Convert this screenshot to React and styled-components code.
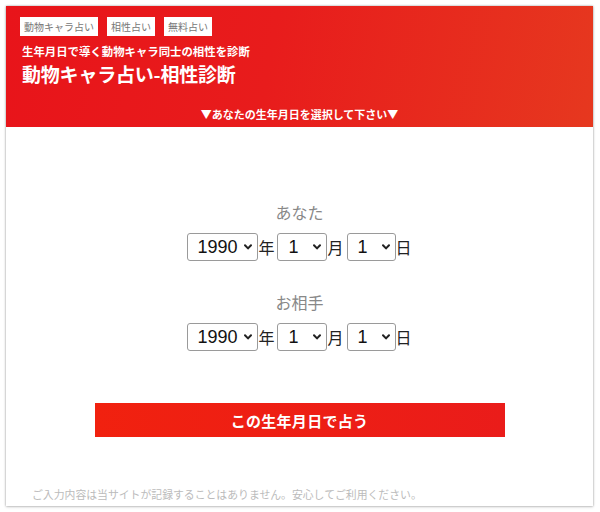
import React from "react";
import styled, { createGlobalStyle } from "styled-components";

const Global = createGlobalStyle`
  html, body { margin: 0; padding: 0; background: #ffffff; }
  body { font-family: "Noto Sans CJK JP", "Noto Sans", sans-serif; }
  * { box-sizing: border-box; }
`;

const Page = styled.div`
  padding: 6px 7px 6px 6px;
  width: 600px;
`;

const Card = styled.div`
  width: 587px;
  height: 500px;
  background: #fff;
  box-shadow: 0 0 2px rgba(0, 0, 0, 0.35), 0 1px 3px rgba(0, 0, 0, 0.15);
  display: flex;
  flex-direction: column;
`;

const Header = styled.header`
  height: 121px;
  background: linear-gradient(100deg, #e8141a 0%, #e81c1c 45%, #e6381f 100%);
  padding: 11px 14px 0;
  color: #fff;
  display: flex;
  flex-direction: column;
`;

const Tags = styled.div`
  display: flex;
  gap: 9px;
`;

const Tag = styled.span`
  background: #fff;
  color: #777;
  font-size: 10px;
  line-height: 19px;
  height: 19px;
  padding: 0 4px;
`;

const Sub = styled.div`
  margin-top: 7px;
  padding-left: 2px;
  font-size: 11.4px;
  line-height: 16px;
  font-weight: 700;
`;

const Title = styled.h1`
  margin: 3px 0 0;
  padding-left: 2px;
  font-size: 19px;
  line-height: 24px;
  font-weight: 700;
  letter-spacing: -0.2px;
`;

const Instruction = styled.div`
  margin-top: 20px;
  text-align: center;
  font-size: 11px;
  line-height: 16px;
  font-weight: 700;
`;

const Body = styled.main`
  flex: 1;
  display: flex;
  flex-direction: column;
  align-items: center;
`;

const PersonLabel = styled.div`
  margin-top: ${(p) => p.$top}px;
  font-size: 16px;
  line-height: 22px;
  color: #888;
`;

const DateRow = styled.div`
  margin-top: 10px;
  display: flex;
  align-items: center;
  height: 28px;
`;

const SelectWrap = styled.span`
  position: relative;
  display: inline-block;
  width: ${(p) => p.$w}px;
  height: 28px;
`;

const Select = styled.select`
  appearance: none;
  -webkit-appearance: none;
  width: 100%;
  height: 28px;
  border: 1px solid #9a9a9a;
  border-radius: 3px;
  background: #fff;
  color: #111;
  font-family: "Liberation Sans", "Noto Sans", sans-serif;
  font-size: 18px;
  padding: 0 0 0 ${(p) => p.$pl}px;
  outline: none;
`;

const Chevron = styled.svg`
  position: absolute;
  right: 6px;
  top: 11px;
  width: 8px;
  height: 6px;
  pointer-events: none;
`;

const Unit = styled.span`
  font-size: 16px;
  color: #222;
  margin-right: ${(p) => p.$mr}px;
  line-height: 28px;
`;

const Button = styled.button`
  margin-top: 52px;
  width: 410px;
  height: 34px;
  border: none;
  background: linear-gradient(90deg, #f1210f 0%, #ea1c1a 100%);
  color: #fff;
  font-family: "Noto Sans CJK JP", sans-serif;
  font-size: 15px;
  font-weight: 700;
  letter-spacing: 0.3px;
  padding: 0;
`;

const Note = styled.p`
  margin: 49px 0 0;
  align-self: flex-start;
  padding-left: 26px;
  font-size: 10.85px;
  line-height: 16px;
  color: #bbb;
`;

const years = Array.from({ length: 100 }, (_, i) => 1930 + i);
const months = Array.from({ length: 12 }, (_, i) => i + 1);
const days = Array.from({ length: 31 }, (_, i) => i + 1);

function Picker({ w, pl, options, value }) {
  return (
    <SelectWrap $w={w}>
      <Select $pl={pl} defaultValue={value}>
        {options.map((o) => (
          <option key={o} value={o}>
            {o}
          </option>
        ))}
      </Select>
      <Chevron viewBox="0 0 8 6">
        <path d="M1 1.2 L4 4.4 L7 1.2" fill="none" stroke="#222" strokeWidth="2" strokeLinecap="round" strokeLinejoin="round" />
      </Chevron>
    </SelectWrap>
  );
}

function DateInputs() {
  return (
    <DateRow>
      <Picker w={71} pl={9} options={years} value={1990} />
      <Unit $mr={3}>年</Unit>
      <Picker w={50} pl={10} options={months} value={1} />
      <Unit $mr={3}>月</Unit>
      <Picker w={49} pl={10} options={days} value={1} />
      <Unit $mr={0}>日</Unit>
    </DateRow>
  );
}

export default function App() {
  return (
    <Page>
      <Global />
      <Card>
        <Header>
          <Tags>
            <Tag>動物キャラ占い</Tag>
            <Tag>相性占い</Tag>
            <Tag>無料占い</Tag>
          </Tags>
          <Sub>生年月日で導く動物キャラ同士の相性を診断</Sub>
          <Title>動物キャラ占い-相性診断</Title>
          <Instruction>▼あなたの生年月日を選択して下さい▼</Instruction>
        </Header>
        <Body>
          <PersonLabel $top={74}>あなた</PersonLabel>
          <DateInputs />
          <PersonLabel $top={30}>お相手</PersonLabel>
          <DateInputs />
          <Button>この生年月日で占う</Button>
          <Note>ご入力内容は当サイトが記録することはありません。安心してご利用ください。</Note>
        </Body>
      </Card>
    </Page>
  );
}
